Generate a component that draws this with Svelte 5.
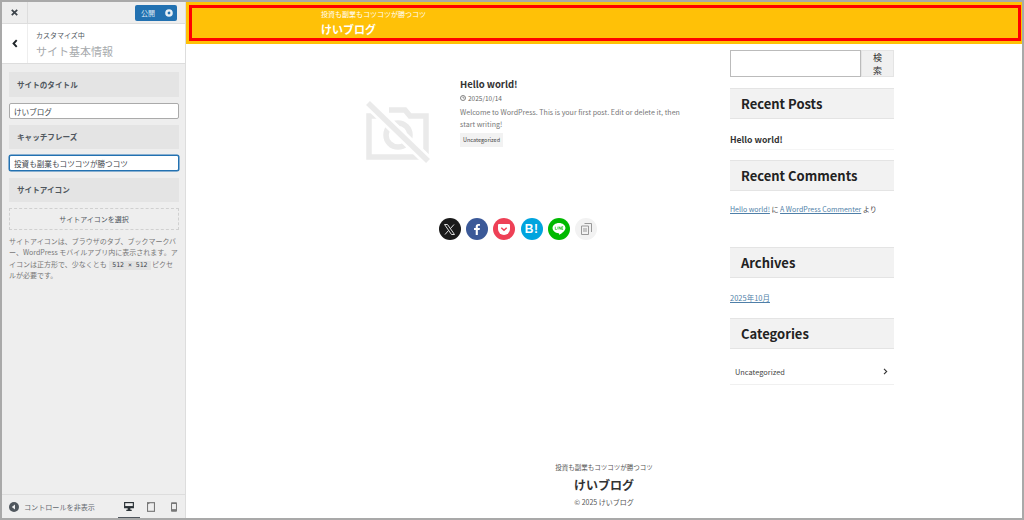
<script>
	const recent = ['Hello world!'];
	const shares = [
		{ name: 'x', color: '#1a1a1a' },
		{ name: 'fb', color: '#3b5998' },
		{ name: 'pocket', color: '#ee4056' },
		{ name: 'hb', color: '#00a4de' },
		{ name: 'line', color: '#00b900' },
		{ name: 'copy', color: '#f2f2f2' }
	];
</script>

<div class="frame">
	<aside class="panel">
		<div class="topbar">
			<button class="close" aria-label="close">
				<svg width="7" height="7" viewBox="0 0 9 9"><path d="M1 1l7 7M8 1L1 8" stroke="#3c434a" stroke-width="2.2" /></svg>
			</button>
			<button class="publish">
				<span>公開</span>
				<svg width="8" height="8" viewBox="0 0 8 8"><circle cx="4" cy="4" r="2.6" fill="none" stroke="#e8f0f6" stroke-width="2.4" /></svg>
			</button>
		</div>
		<div class="info">
			<button class="back" aria-label="back">
				<svg width="6" height="9" viewBox="0 0 7 10"><path d="M5.5 1L1.8 5l3.7 4" fill="none" stroke="#1d2327" stroke-width="2.2" /></svg>
			</button>
			<div class="info-text">
				<div class="small">カスタマイズ中</div>
				<div class="big">サイト基本情報</div>
			</div>
		</div>
		<div class="controls">
			<div class="sec first">サイトのタイトル</div>
			<input class="field" value="けいブログ" />
			<div class="sec">キャッチフレーズ</div>
			<input class="field focus" value="投資も副業もコツコツが勝つコツ" />
			<div class="sec third">サイトアイコン</div>
			<div class="pick">サイトアイコンを選択</div>
			<p class="desc">サイトアイコンは、ブラウザのタブ、ブックマークバー、WordPress モバイルアプリ内に表示されます。アイコンは正方形で、少なくとも <code>512 × 512</code> ピクセルが必要です。</p>
		</div>
		<div class="foot">
			<svg class="hide-ic" width="10" height="10" viewBox="0 0 10 10"><circle cx="5" cy="5" r="5" fill="#50575e" /><path d="M6 2.6v4.8L2.8 5z" fill="#f0f0f1" /></svg>
			<span class="hide">コントロールを非表示</span>
			<div class="devices">
				<span class="dev on">
					<svg width="10" height="9" viewBox="0 0 11 10"><path d="M0 0h11v7H7v1.5h1.5V10h-6V8.5H4V7H0z" fill="#2c3338" /><path d="M1.3 1.3h8.4v3.2H1.3z" fill="#eee" /></svg>
				</span>
				<span class="dev">
					<svg width="8" height="10" viewBox="0 0 9 11"><path d="M0 0h9v11H0z" fill="#777" /><path d="M1.2 2.5L3.5 1.2h4.3v8.6H1.2z" fill="#eee" /></svg>
				</span>
				<span class="dev">
					<svg width="6" height="10" viewBox="0 0 7 11"><rect width="7" height="11" rx="1" fill="#777" /><path d="M1.2 2h4.6v6H1.2z" fill="#eee" /></svg>
				</span>
			</div>
		</div>
	</aside>

	<main class="site">
		<header class="head">
			<div class="head-inner">
				<div class="tagline">投資も副業もコツコツが勝つコツ</div>
				<div class="logo">けいブログ</div>
			</div>
		</header>

		<div class="columns">
			<div class="content">
				<article class="post">
					<div class="thumb">
						<svg width="66" height="64" viewBox="0 0 66 64">
							<path d="M13 16H4v41h57V16H45l-5-6H24" fill="none" stroke="#eaeaea" stroke-width="5.5" />
							<circle cx="33" cy="35" r="12" fill="none" stroke="#eaeaea" stroke-width="5.5" />
							<path d="M3 3l60 58" stroke="#fff" stroke-width="11" />
							<path d="M3 3l60 58" stroke="#eaeaea" stroke-width="5.5" />
						</svg>
					</div>
					<div class="post-body">
						<h2>Hello world!</h2>
						<div class="date">
							<svg width="6" height="6" viewBox="0 0 6 6"><circle cx="3" cy="3" r="2.5" fill="none" stroke="#666" stroke-width=".8" /><path d="M3 1.5V3h1.4" fill="none" stroke="#666" stroke-width=".7" /></svg>
							2025/10/14
						</div>
						<p>Welcome to WordPress. This is your first post. Edit or delete it, then start writing!</p>
						<span class="cat">Uncategorized</span>
					</div>
				</article>

				<div class="share">
					{#each shares as s}
						<span class="round" style="background:{s.color}">
							{#if s.name === 'x'}
								<svg width="11" height="11" viewBox="0 0 11 11"><path d="M.5.5h3l7 10h-3zM10 .5L6.3 4.7M4.7 6.3L1 10.5" fill="none" stroke="#ddd" stroke-width="1" /></svg>
							{:else if s.name === 'fb'}
								<svg width="6" height="11" viewBox="0 0 7 13"><path d="M2 13V7H0V4.8h2V3.2C2 1.2 3.2 0 5 0h2v2.2H5.6C4.8 2.2 4.5 2.6 4.5 3.3v1.5H7L6.6 7H4.5v6z" fill="#fff" /></svg>
							{:else if s.name === 'pocket'}
								<svg width="12" height="11" viewBox="0 0 12 11"><path d="M1 0h10a1 1 0 0 1 1 1v4a6 6 0 0 1-12 0V1a1 1 0 0 1 1-1z" fill="#fff" /><path d="M3.3 3.7L6 6.3l2.7-2.6" fill="none" stroke="#ee4056" stroke-width="1.5" /></svg>
							{:else if s.name === 'hb'}
								<span class="hb">B!</span>
							{:else if s.name === 'line'}
								<svg width="14" height="12" viewBox="0 0 14 13"><path d="M7 0c3.9 0 7 2.4 7 5.5 0 3-4 6-7 7.5.3-1 .3-2-.5-2C3 11 0 8.5 0 5.5 0 2.4 3.100 0 7 0z" fill="#fff" /><path d="M3 4v3h1.6M5.8 4v3M7.2 7V4l1.8 3V4M11.5 4H10v3h1.500M10 5.5h1.4" fill="none" stroke="#00b900" stroke-width=".7" /></svg>
							{:else}
								<svg width="11" height="12" viewBox="0 0 11 12"><path d="M3.5.5h7v8.500M.5 3h7v8.500h-7zM2 6h4M2 8h4" fill="none" stroke="#999" stroke-width="1" /></svg>
							{/if}
						</span>
					{/each}
				</div>
			</div>

			<div class="side">
				<div class="search">
					<div class="search-box"></div>
					<div class="search-btn">検索</div>
				</div>
				<h3 class="w-title">Recent Posts</h3>
				<div class="recent">
					{#each recent as r}
						<div>{r}</div>
					{/each}
				</div>
				<h3 class="w-title">Recent Comments</h3>
				<div class="comment"><span class="link">Hello world!</span> に <span class="link">A WordPress Commenter</span> より</div>
				<h3 class="w-title">Archives</h3>
				<div class="month"><span class="link">2025年10月</span></div>
				<h3 class="w-title">Categories</h3>
				<div class="cat-row">
					<span>Uncategorized</span>
					<svg width="5" height="7" viewBox="0 0 5 7"><path d="M1 .8L3.7 3.5 1 6.2" fill="none" stroke="#333" stroke-width="1.1" /></svg>
				</div>
			</div>
		</div>

		<footer class="foot-site">
			<div class="f-tag">投資も副業もコツコツが勝つコツ</div>
			<div class="f-logo">けいブログ</div>
			<div class="f-copy">© 2025 けいブログ</div>
		</footer>
	</main>
</div>

<style>
	:global(body) {
		margin: 0;
		font-family: "Noto Sans CJK JP", "Noto Sans", sans-serif;
	}

	.frame {
		width: 1024px;
		height: 520px;
		box-sizing: border-box;
		border: 2px solid #a9a9a9;
		display: flex;
		overflow: hidden;
		background: #fff;
	}

	/* customizer panel */
	.panel {
		width: 183px;
		flex: none;
		background: #eee;
		border-right: 1px solid #ddd;
		display: flex;
		flex-direction: column;
	}

	.topbar {
		height: 21px;
		display: flex;
		align-items: center;
		justify-content: space-between;
		border-bottom: 1px solid #ddd;
		padding-right: 8px;
	}

	.topbar button {
		border: 0;
		font-family: inherit;
		padding: 0;
	}

	.close {
		width: 26px;
		height: 21px;
		background: transparent;
		border-right: 1px solid #ddd !important;
		display: flex;
		align-items: center;
		justify-content: center;
	}

	.publish {
		width: 42px;
		height: 16px;
		background: #2271b1;
		color: #dfeaf3;
		border-radius: 2px;
		font-size: 7px;
		display: flex;
		align-items: center;
		justify-content: space-between;
		padding: 0 4px 0 6px !important;
	}

	.info {
		height: 39px;
		background: #fff;
		border-bottom: 1px solid #ddd;
		display: flex;
	}

	.back {
		width: 26px;
		border: 0;
		border-right: 1px solid #eee;
		background: #fff;
		padding: 0;
		display: flex;
		align-items: center;
		justify-content: center;
	}

	.info-text {
		padding: 6px 0 0 8px;
	}

	.small {
		font-size: 7px;
		line-height: 11px;
		color: #50575e;
	}

	.big {
		font-size: 11px;
		line-height: 17px;
		margin-top: 2px;
		color: #a7aaad;
	}

	.controls {
		flex: 1;
		padding: 8px 6px 0 7px;
	}

	.sec {
		height: 24px;
		background: #e4e4e4;
		font-size: 7.6px;
		font-weight: 700;
		line-height: 24px;
		padding-left: 8px;
		color: #50575e;
	}

	.first {
		height: 25px;
		line-height: 25px;
	}

	.field {
		display: block;
		box-sizing: border-box;
		width: 100%;
		height: 16px;
		margin: 6px 0;
		padding: 0 4px;
		border: 1px solid #aaa;
		border-radius: 2px;
		background: #fff;
		font-family: inherit;
		font-size: 7.6px;
		color: #3c434a;
		outline: none;
	}

	.focus {
		border-color: #2271b1;
		box-shadow: 0 0 0 .5px #2271b1;
	}

	.third {
		margin-top: 7px;
	}

	.pick {
		margin-top: 6px;
		height: 22px;
		box-sizing: border-box;
		border: 1px dashed #d0d0d0;
		font-size: 7px;
		line-height: 20px;
		text-align: center;
		color: #50575e;
	}

	.desc {
		margin: 6px 0 0;
		font-size: 7px;
		line-height: 11.3px;
		color: #777;
		line-break: anywhere;
	}

	code {
		display: inline-block;
		line-height: 9px;
		margin-left: 1px;
		background: #e2e2e2;
		font-family: "DejaVu Sans Mono", monospace;
		font-size: 6.5px;
		padding: 0 3px;
		color: #3c434a;
		white-space: nowrap;
	}

	.foot {
		height: 23px;
		border-top: 1px solid #ddd;
		display: flex;
		align-items: center;
		padding-left: 7px;
	}

	.hide {
		margin-left: 5px;
		font-size: 7.1px;
		color: #646970;
	}

	.devices {
		margin-left: auto;
		display: flex;
		align-items: stretch;
		height: 100%;
	}

	.dev {
		width: 22.5px;
		display: flex;
		align-items: center;
		justify-content: center;
		box-sizing: border-box;
	}

	.on {
		border-bottom: 1px solid #50575e;
	}

	/* preview */
	.site {
		flex: 1;
		min-width: 0;
		display: flex;
		flex-direction: column;
	}

	.head {
		height: 42px;
		flex: none;
		box-sizing: border-box;
		background: #ffc107;
		padding: 3px 1px 3px 3px;
	}

	.head-inner {
		height: 100%;
		box-sizing: border-box;
		border: 3px solid #f00;
		padding-left: 129px;
		color: #fff;
	}

	.tagline {
		font-size: 7px;
		line-height: 12px;
	}

	.logo {
		font-size: 11px;
		font-weight: 700;
		line-height: 17px;
		margin-top: 1px;
	}

	.columns {
		display: flex;
		height: 392px;
		padding-left: 179px;
		gap: 40px;
	}

	.content {
		width: 325px;
		flex: none;
	}

	.post {
		display: flex;
		padding-top: 33px;
	}

	.thumb {
		width: 95px;
		flex: none;
		padding-top: 23px;
	}

	.thumb svg {
		display: block;
	}

	.post-body {
		flex: 1;
		min-width: 0;
	}

	h2 {
		margin: 0;
		font-size: 9.5px;
		line-height: 15px;
		color: #333;
	}

	.date {
		margin-top: .5px;
		font-size: 6.5px;
		line-height: 10px;
		color: #666;
		display: flex;
		align-items: center;
		gap: 2px;
	}

	.post-body p {
		margin: 3px 0 0;
		font-size: 7.1px;
		line-height: 12px;
		color: #777;
	}

	.cat {
		display: block;
		width: fit-content;
		margin-top: 3px;
		background: #f2f2f2;
		padding: 0 3px;
		font-size: 5.5px;
		line-height: 14px;
		color: #444;
	}

	.share {
		display: flex;
		justify-content: center;
		gap: 5.3px;
		padding-top: 54px;
		padding-right: 19px;
	}

	.round {
		width: 22px;
		height: 22px;
		border-radius: 50%;
		display: flex;
		align-items: center;
		justify-content: center;
	}

	.hb {
		color: #fff;
		font-family: "Liberation Sans", sans-serif;
		font-weight: 700;
		font-size: 12px;
		letter-spacing: .5px;
	}

	.side {
		width: 164px;
		flex: none;
		padding-top: 6px;
	}

	.search {
		display: flex;
		height: 27px;
	}

	.search-box {
		width: 131px;
		box-sizing: border-box;
		border: 1px solid #bbb;
		background: #fff;
	}

	.search-btn {
		flex: 1;
		box-sizing: border-box;
		background: #f0f0f0;
		border: 1px solid #e4e4e4;
		font-size: 9px;
		line-height: 13px;
		text-align: center;
		padding: 0 8px;
		color: #333;
	}

	.w-title {
		margin: 0;
		height: 31px;
		box-sizing: border-box;
		background: #f2f2f2;
		border-top: 1px solid #e4e4e4;
		border-bottom: 1px solid #e4e4e4;
		font-size: 13px;
		line-height: 29px;
		padding-left: 11px;
		color: #222;
	}

	.search + .w-title {
		margin-top: 11px;
	}

	.recent {
		font-size: 8.7px;
		font-weight: 700;
		line-height: 13px;
		color: #333;
		padding: 14px 0 3px;
		border-bottom: 1px solid #f5f5f5;
		margin-bottom: 10px;
	}

	.comment {
		font-size: 7px;
		line-height: 11px;
		color: #444;
		padding-top: 12.5px;
		height: 43.5px;
	}

	.month {
		font-size: 7.5px;
		line-height: 11px;
		padding-top: 13.5px;
		height: 26.5px;
	}

	.link {
		color: #4f7fa8;
		text-decoration: underline;
	}

	.cat-row {
		display: flex;
		justify-content: space-between;
		align-items: center;
		margin-top: 10.5px;
		padding: 0 6px 0 5px;
		height: 24px;
		border-bottom: 1px solid #f0f0f0;
		font-size: 7.4px;
		color: #444;
	}

	.foot-site {
		flex: 1;
		text-align: center;
		padding-top: 26px;
	}

	.f-tag {
		font-size: 6.5px;
		line-height: 11px;
		color: #555;
	}

	.f-logo {
		font-size: 12px;
		font-weight: 700;
		line-height: 18px;
		margin-top: 3px;
		color: #333;
	}

	.f-copy {
		font-size: 7px;
		line-height: 11px;
		margin-top: 3px;
		color: #555;
	}
</style>
